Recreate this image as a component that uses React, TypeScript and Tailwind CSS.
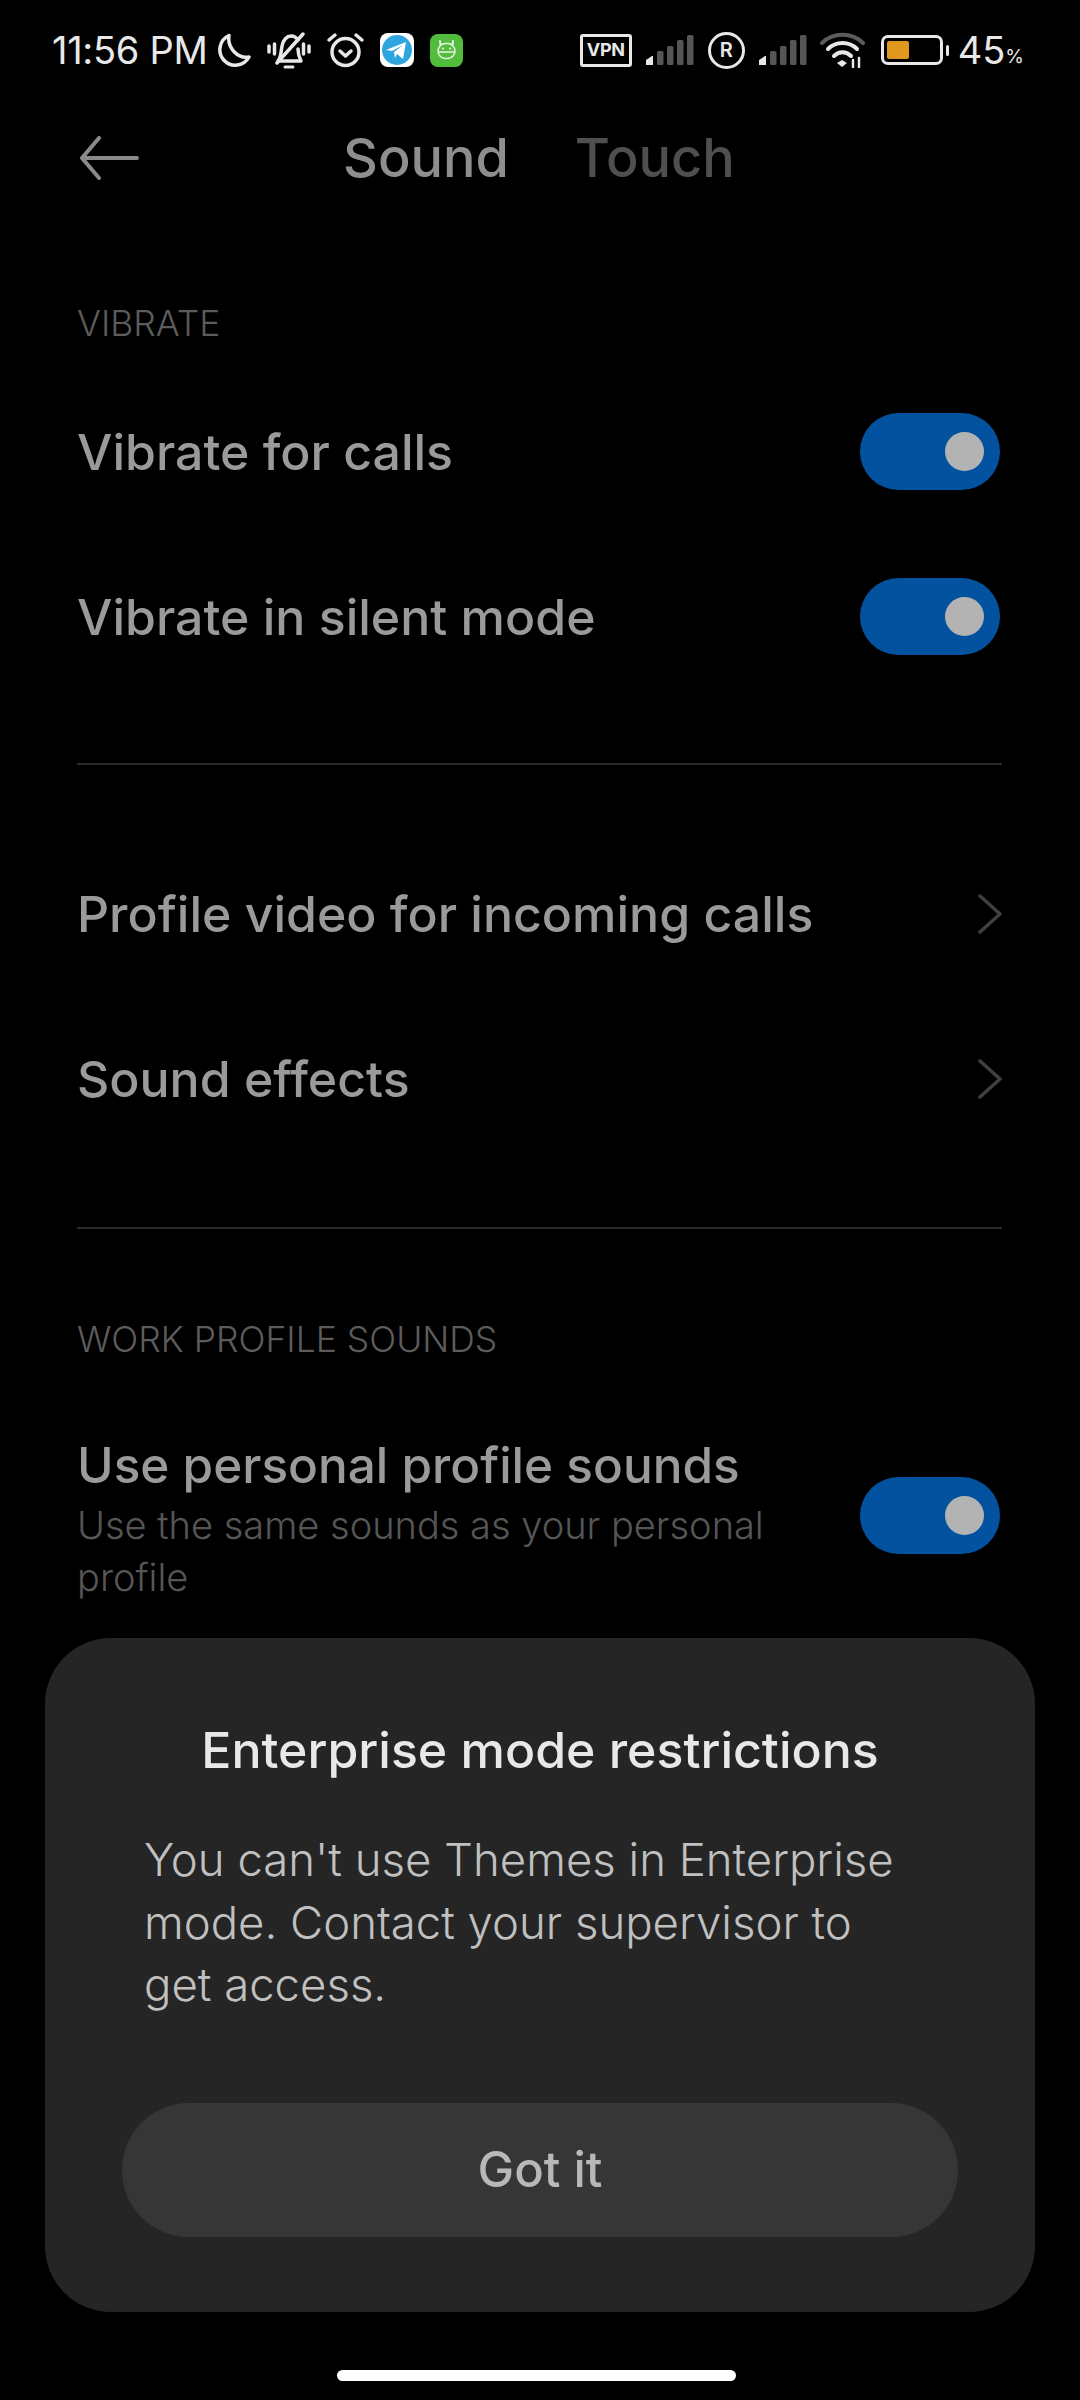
const font = "font-['Inter','Noto_Sans',sans-serif]"

function Toggle() {
    return (
        <div className="w-[140px] h-[77px] rounded-full bg-[#02529f] flex items-center justify-end pr-[16px] shrink-0">
            <div className="w-[39px] h-[39px] rounded-full bg-[#b3b3b3]" />
        </div>
    )
}

function Signal() {
    return (
        <svg width="48" height="32" viewBox="0 0 48 32" className="shrink-0">
            <path d="M0 31v-5l6-4h1v9z" fill="#e6e6e6" />
            <rect x="11" y="17" width="6.5" height="14" rx="1.5" fill="#555" />
            <rect x="21" y="12" width="6.5" height="19" rx="1.5" fill="#555" />
            <rect x="31" y="6" width="6.5" height="25" rx="1.5" fill="#555" />
            <rect x="41" y="1" width="6.5" height="30" rx="1.5" fill="#555" />
        </svg>
    )
}

function StatusBar() {
    return (
        <div className="h-[100px] flex items-center justify-between pl-[52px] pr-[56px] text-[#e8e8e8]">
            <div className="flex items-center">
                <span className="text-[38px] leading-none tracking-[-0.3px] w-[165px] whitespace-nowrap">11:56 PM</span>
                <svg width="34" height="35" viewBox="0 0 34 35" fill="none" stroke="#e8e8e8" strokeWidth="3.5" strokeLinejoin="round">
                    <path d="M12 2.5a15.5 15.5 0 1 0 20 21.5C21 26 10 15 12 2.5z" />
                </svg>
                <svg width="44" height="37" viewBox="0 0 44 37" fill="none" stroke="#e8e8e8" strokeWidth="3.5" strokeLinecap="round" strokeLinejoin="round" className="ml-[16px]">
                    <path d="M2 14v6M7.500 12v10M36.500 12v10M42 14v6" />
                    <path d="M11 29c3-3 3-9 4-15 1-6 5-10 9-10 3 0 5 1 7 4M31 17c0 4 1 8 3 12H13" />
                    <path d="M18 35h8" strokeWidth="3" />
                    <path d="M36 2 10 31" />
                </svg>
                <svg width="39" height="36" viewBox="0 0 39 36" fill="none" stroke="#e8e8e8" strokeWidth="3.5" strokeLinecap="round" strokeLinejoin="round" className="ml-[15px]">
                    <circle cx="19.500" cy="20" r="13.500" />
                    <path d="M14 19l5.500 5 5.500-5M3 8l6-5M36 8l-6-5" />
                </svg>
                <svg width="34" height="34" viewBox="0 0 34 34" className="ml-[15px]">
                    <rect width="34" height="34" rx="8" fill="#fff" />
                    <circle cx="17" cy="17" r="15" fill="#2fa5e0" />
                    <path d="M6 17 26 9l-3 17-6-5-2 4-1-6 9-7-11 6z" fill="#fff" />
                </svg>
                <svg width="33" height="33" viewBox="0 0 33 33" className="ml-[16px]">
                    <rect width="33" height="33" rx="8" fill="#52bd3d" />
                    <path d="M10.500 11 10 7M22.500 11 23 7" stroke="#e8f5e4" strokeWidth="2" strokeLinecap="round" />
                    <rect x="8" y="9.500" width="17" height="15" rx="7.500" fill="none" stroke="#e8f5e4" strokeWidth="1.500" />
                    <path d="M8.500 18h16" stroke="#e8f5e4" strokeWidth="1.500" />
                    <circle cx="13" cy="14.500" r="1.100" fill="#e8f5e4" />
                    <circle cx="20" cy="14.500" r="1.100" fill="#e8f5e4" />
                </svg>
            </div>
            <div className="flex items-center">
                <div className="w-[52px] h-[33px] border-[3px] border-[#e8e8e8] rounded-[3px] flex items-center justify-center text-[18px] font-bold leading-none tracking-[-0.4px]">VPN</div>
                <div className="ml-[14px]"><Signal /></div>
                <div className="ml-[14px] w-[37px] h-[37px] rounded-full border-[3px] border-[#e8e8e8] flex items-center justify-center text-[20px] font-semibold leading-none">R</div>
                <div className="ml-[14px]"><Signal /></div>
                <svg width="45" height="36" viewBox="0 0 45 36" fill="none" strokeLinecap="round" className="ml-[13px]">
                    <path d="M2 11c11-11 30-11 41 0" stroke="#5c5c5c" strokeWidth="4" />
                    <path d="M8 17c8-8 21-8 29 0" stroke="#e8e8e8" strokeWidth="4" />
                    <path d="M14 24c5-5 12-5 17 0" stroke="#e8e8e8" strokeWidth="4" />
                    <path d="M17 31l5-3 5 3-5 4z" fill="#e8e8e8" />
                    <path d="M33 28v7M39 26v9" stroke="#e8e8e8" strokeWidth="2.500" />
                </svg>
                <div className="ml-[16px] w-[62px] h-[30px] rounded-[7px] border-[3px] border-[#e8e8e8] p-[3px]">
                    <div className="w-[22px] h-full rounded-[2px] bg-[#e0981f]" />
                </div>
                <div className="ml-[3px] w-[3px] h-[11px] rounded-full bg-[#e8e8e8]" />
                <span className="ml-[9px] text-[38px] leading-none">45</span>
                <span className="text-[19px] leading-none mt-[12px]">%</span>
            </div>
        </div>
    )
}

function SectionLabel({ children }: { children: string }) {
    return <p className="text-[35.5px] font-[350] leading-[44px] text-[#5c5c5c]">{children}</p>
}

function SwitchRow({ label }: { label: string }) {
    return (
        <div className="h-[165px] flex items-center justify-between pr-[2px]">
            <span className="text-[50px] font-medium text-[#9a9a9a] leading-none">{label}</span>
            <Toggle />
        </div>
    )
}

function LinkRow({ label }: { label: string }) {
    return (
        <div className="h-[165px] flex items-center justify-between">
            <span className="text-[50px] font-medium text-[#9a9a9a] leading-none">{label}</span>
            <svg width="24" height="40" viewBox="0 0 24 40" fill="none" stroke="#404040" strokeWidth="3.500" strokeLinecap="round" strokeLinejoin="round">
                <path d="M2 2l20 18L2 38" />
            </svg>
        </div>
    )
}

export default function App() {
    return (
        <div className={`relative w-[1080px] h-[2400px] bg-black overflow-hidden ${font}`}>
            <StatusBar />
            <div className="h-[116px] flex items-center pl-[78px]">
                <svg width="62" height="44" viewBox="0 0 62 44" fill="none" stroke="#8a8a8a" strokeWidth="4" strokeLinecap="round" strokeLinejoin="round">
                    <path d="M59 22H4M21 2 4 22l17 20" />
                </svg>
                <div className="ml-[203px] text-[54px] font-medium text-[#8e8e8e] leading-none">Sound</div>
                <div className="ml-[66px] text-[54px] font-medium text-[#4f4f4f] leading-none">Touch</div>
            </div>
            <div className="pl-[77px] pr-[78px]">
                <div className="mt-[86px]"><SectionLabel>VIBRATE</SectionLabel></div>
                <div className="mt-[23px]">
                    <SwitchRow label="Vibrate for calls" />
                    <SwitchRow label="Vibrate in silent mode" />
                </div>
                <div className="mt-[64px] h-[2px] bg-[#2a2a2a]" />
                <div className="mt-[66px]">
                    <LinkRow label="Profile video for incoming calls" />
                    <LinkRow label="Sound effects" />
                </div>
                <div className="mt-[66px] h-[2px] bg-[#2a2a2a]" />
                <div className="mt-[89px]"><SectionLabel>WORK PROFILE SOUNDS</SectionLabel></div>
                <div className="mt-[75px] flex items-start justify-between pr-[2px]">
                    <div className="w-[720px]">
                        <p className="text-[49.5px] font-medium text-[#9a9a9a] leading-[56px]">Use personal profile sounds</p>
                        <p className="text-[38px] font-[350] text-[#565656] leading-[52px] mt-[6px]">Use the same sounds as your personal profile</p>
                    </div>
                    <div className="mt-[40px]"><Toggle /></div>
                </div>
            </div>

            {/* dialog sits over the page */}
            <div className="absolute left-[45px] top-[1638px] w-[990px] h-[674px] rounded-[66px] bg-[#252525] px-[78px]">
                <h2 className="mt-[84px] text-center text-[50px] font-medium text-[#e8e8e8] leading-[56px]">Enterprise mode restrictions</h2>
                <p className="mt-[51px] ml-[21px] w-[770px] text-[45.5px] font-[350] text-[#c0c0c0] leading-[62.5px]">You can't use Themes in Enterprise mode. Contact your supervisor to get access.</p>
                <div className="absolute left-[77px] top-[465px] w-[836px] h-[134px] rounded-full bg-[#363636] flex items-center justify-center text-[49px] font-medium text-[#b8b8b8]">Got it</div>
            </div>

            <div className="absolute left-[337px] top-[2370px] w-[399px] h-[11px] rounded-full bg-white" />
        </div>
    )
}
